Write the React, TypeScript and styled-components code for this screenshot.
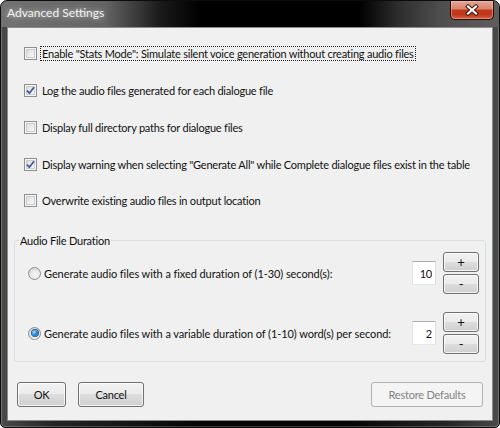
import React from "react";
import styled, { createGlobalStyle } from "styled-components";

const GlobalStyle = createGlobalStyle`
  html, body { margin: 0; padding: 0; background: #ffffff; }
  body {
    width: 500px;
    height: 428px;
    overflow: hidden;
    font-family: Lato, "Liberation Sans", sans-serif;
    font-size: 11px;
    letter-spacing: -0.22px;
    color: #111;
  }
  * { box-sizing: border-box; }
`;

const Window = styled.div`
  width: 500px;
  height: 428px;
  display: flex;
  flex-direction: column;
  border: 1px solid #0c0c0c;
  border-radius: 7px 7px 5px 5px;
  background: linear-gradient(90deg, #4a4a4a 0%, #262626 10%, #060606 40%, #060606 70%, #262626 90%, #4a4a4a 100%);
  box-shadow: inset 0 0 0 1px rgba(255, 255, 255, 0.22);
  padding: 0 6px 6px;
  overflow: hidden;
`;

const TitleBar = styled.div`
  height: 26px;
  margin: 0 -6px;
  padding: 0 5px 0 6px;
  display: flex;
  align-items: flex-start;
  justify-content: space-between;
  border-radius: 6px 6px 0 0;
  background: linear-gradient(90deg, #727272 0%, #646464 21%, #1a1a1a 32%, #000 40%, #000 72%, #2e2e2e 80%, #4d4d4d 88%, #5e5e5e 100%);
`;

const TitleText = styled.span`
  font-family: Lato, "Liberation Sans", sans-serif;
  font-size: 12px;
  letter-spacing: 0;
  line-height: 24px;
  color: #f2f2f2;
  text-shadow: 0 0 4px rgba(180, 180, 180, 0.95), 0 0 10px rgba(170, 170, 170, 0.9);
`;

const CloseButton = styled.div`
  width: 44px;
  height: 19px;
  border: 1px solid #2c0a03;
  border-top: none;
  border-radius: 0 0 5px 5px;
  background: linear-gradient(180deg, #e7a593 0%, #d88670 42%, #c1391d 52%, #bd391b 75%, #d8603d 100%);
  box-shadow: inset 0 0 0 1px rgba(255, 205, 185, 0.45);
  display: flex;
  align-items: center;
  justify-content: center;
`;

const Client = styled.div`
  flex: 1;
  background: #f0f0f0;
  border: 1px solid #8b8b8b;
  display: flex;
  flex-direction: column;
  padding-top: 7.5px;
`;

const CheckRow = styled.div`
  height: 36.75px;
  display: flex;
  align-items: center;
  gap: 3px;
  padding-left: 16px;
`;

const CheckBox = styled.span`
  width: 13px;
  height: 13px;
  flex: none;
  border: 1px solid #8e8f8f;
  background: linear-gradient(135deg, #d3d5d8 0%, #eeeeee 55%, #fbfbfb 100%);
  box-shadow: inset 0 0 0 1px #f6f6f6, inset 0 0 0 2px #c9ccd1;
  display: flex;
  align-items: center;
  justify-content: center;
`;

const OptionLabel = styled.span<{ $focused?: boolean }>`
  padding: 0 1px;
  line-height: 13px;
  white-space: nowrap;
  border: 1px dotted ${(p) => (p.$focused ? "#222" : "transparent")};
`;

const Group = styled.fieldset`
  margin: 13.75px 6px 0;
  padding: 4px 0 7px;
  border: 1px solid #d5dfe5;
  border-radius: 3px;
  min-width: 0;
`;

const Legend = styled.legend`
  margin-left: 4px;
  padding: 0 1px;
  line-height: 15px;
  font-size: 11px;
`;

const OptionList = styled.div`
  display: flex;
  flex-direction: column;
  gap: 18px;
`;

const DurationRow = styled.div`
  display: flex;
  align-items: center;
  justify-content: space-between;
  padding: 0 6px 0 13px;
`;

const RadioLabel = styled.label`
  display: flex;
  align-items: center;
  gap: 3px;
  white-space: nowrap;
  letter-spacing: -0.08px;
`;

const Radio = styled.span`
  width: 13px;
  height: 13px;
  flex: none;
  border-radius: 50%;
  border: 1px solid #8e8f8f;
  background: radial-gradient(circle at 60% 65%, #fafafa 0%, #e6e6e6 50%, #c4c4c4 100%);
  display: flex;
  align-items: center;
  justify-content: center;
`;

const RadioDot = styled.span`
  width: 6px;
  height: 6px;
  border-radius: 50%;
  background: radial-gradient(circle at 35% 35%, #a8e0ff 0%, #2f8fde 45%, #0b4f9e 100%);
  box-shadow: 0 0 0 1px #2a5f91;
`;

const Spinner = styled.div`
  display: flex;
  align-items: center;
  gap: 7px;
`;

const NumberBox = styled.input`
  width: 24px;
  height: 24px;
  padding: 0 3px 0 0;
  margin: 0;
  border: 1px solid;
  border-color: #abadb3 #dbdfe6 #e3e9ef #e2e3ea;
  background: #fff;
  text-align: right;
  font-family: Lato, "Liberation Sans", sans-serif;
  font-size: 11px;
  letter-spacing: -0.22px;
  color: #111;
  outline: none;
`;

const StepColumn = styled.div`
  display: flex;
  flex-direction: column;
  gap: 2px;
`;

const PushButton = styled.button<{ $width: number; $height: number }>`
  width: ${(p) => p.$width}px;
  height: ${(p) => p.$height}px;
  padding: 0;
  margin: 0;
  font-family: Lato, "Liberation Sans", sans-serif;
  font-size: 11px;
  letter-spacing: -0.22px;
  color: #111;
  border: 1px solid #707070;
  border-radius: 3px;
  background: linear-gradient(180deg, #f2f2f2 0%, #ebebeb 49%, #dddddd 50%, #cfcfcf 100%);
  box-shadow: inset 0 0 0 1px rgba(255, 255, 255, 0.75);
  &:disabled {
    border-color: #adb2b5;
    background: #f4f4f4;
    color: #838383;
    box-shadow: none;
  }
`;

const StepGlyph = styled.span`
  font-size: 13px;
  line-height: 1;
`;

const Footer = styled.div`
  margin-top: 20px;
  display: flex;
  gap: 12px;
  padding: 0 9px;
`;

const Spacer = styled.div`
  flex: 1;
`;

const CheckMark = () => (
  <svg width="9" height="9" viewBox="0 0 9 9">
    <path d="M1 4.6 L3.4 7.2 L8 1.2" fill="none" stroke="#3c5a9a" strokeWidth="1.7" strokeLinejoin="round" />
  </svg>
);

const CloseGlyph = () => (
  <svg width="14" height="12" viewBox="0 0 14 12">
    <path d="M3 2.5 L11 9.5 M11 2.5 L3 9.5" stroke="#3a1208" strokeWidth="4" strokeLinecap="square" />
    <path d="M3 2.5 L11 9.5 M11 2.5 L3 9.5" stroke="#ffffff" strokeWidth="2.2" strokeLinecap="square" />
  </svg>
);

const checks = [
  { text: 'Enable "Stats Mode": Simulate silent voice generation without creating audio files', checked: false, focused: true },
  { text: "Log the audio files generated for each dialogue file", checked: true },
  { text: "Display full directory paths for dialogue files", checked: false },
  { text: 'Display warning when selecting "Generate All" while Complete dialogue files exist in the table', checked: true },
  { text: "Overwrite existing audio files in output location", checked: false },
];

const durations = [
  { text: "Generate audio files with a fixed duration of (1-30) second(s):", value: "10", selected: false },
  { text: "Generate audio files with a variable duration of (1-10) word(s) per second:", value: "2", selected: true },
];

export default function App() {
  return (
    <>
      <GlobalStyle />
      <Window>
        <TitleBar>
          <TitleText>Advanced Settings</TitleText>
          <CloseButton>
            <CloseGlyph />
          </CloseButton>
        </TitleBar>
        <Client>
          {checks.map((c) => (
            <CheckRow key={c.text}>
              <CheckBox>{c.checked && <CheckMark />}</CheckBox>
              <OptionLabel $focused={c.focused}>{c.text}</OptionLabel>
            </CheckRow>
          ))}
          <Group>
            <Legend>Audio File Duration</Legend>
            <OptionList>
              {durations.map((d) => (
                <DurationRow key={d.text}>
                  <RadioLabel>
                    <Radio>{d.selected && <RadioDot />}</Radio>
                    <span>{d.text}</span>
                  </RadioLabel>
                  <Spinner>
                    <NumberBox readOnly value={d.value} />
                    <StepColumn>
                      <PushButton $width={36} $height={20}>
                        <StepGlyph>+</StepGlyph>
                      </PushButton>
                      <PushButton $width={36} $height={20}>
                        <StepGlyph>-</StepGlyph>
                      </PushButton>
                    </StepColumn>
                  </Spinner>
                </DurationRow>
              ))}
            </OptionList>
          </Group>
          <Footer>
            <PushButton $width={49} $height={25}>OK</PushButton>
            <PushButton $width={66} $height={25}>Cancel</PushButton>
            <Spacer />
            <PushButton $width={112} $height={25} disabled>
              Restore Defaults
            </PushButton>
          </Footer>
        </Client>
      </Window>
    </>
  );
}
